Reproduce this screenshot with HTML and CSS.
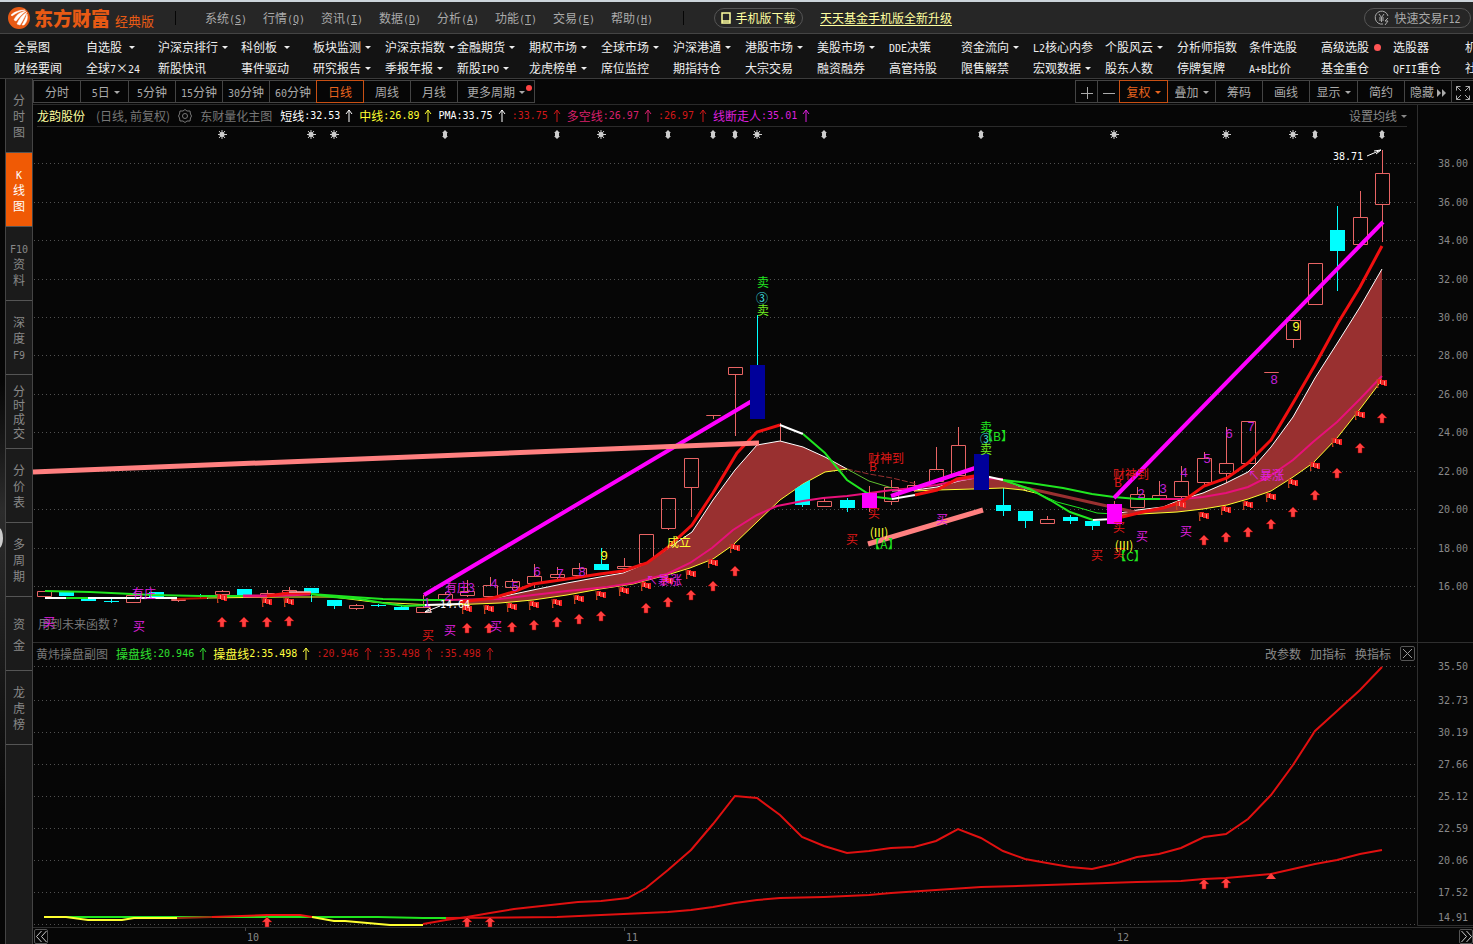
FILE: index.html
```html
<!DOCTYPE html>
<html lang="zh-CN">
<head>
<meta charset="utf-8">
<title>东方财富 经典版</title>
<link rel="stylesheet" href="styles.css">
</head>
<body>
	<header class="titlebar">
		<div class="brand">
			<svg class="logo" viewBox="0 0 22 22">
				<circle cx="11" cy="11" r="11" fill="#e85a14"/>
				<path d="M3 8C6 5 11 3 17 3C12 4 8 6 4 9Z M6 13C8 8 12 5 18 4C14 7 11 10 8 14Z M9 17C11 12 14 8 19 5C17 9 15 13 12 18Z M14 18C16 14 18 11 19 7C20 11 19 15 16 18Z" fill="#fff" stroke="#fff" stroke-width=".5"/>
			</svg>
			<strong>东方财富</strong><span>经典版</span>
		</div>
		<nav class="menu">
			<a href="#">系统<i>(<u>S</u>)</i></a>
			<a href="#">行情<i>(<u>Q</u>)</i></a>
			<a href="#">资讯<i>(<u>I</u>)</i></a>
			<a href="#">数据<i>(<u>D</u>)</i></a>
			<a href="#">分析<i>(<u>A</u>)</i></a>
			<a href="#">功能<i>(<u>T</u>)</i></a>
			<a href="#">交易<i>(<u>E</u>)</i></a>
			<a href="#">帮助<i>(<u>H</u>)</i></a>
		</nav>
		<button class="pill download"><svg width="10" height="12" viewBox="0 0 10 12"><path d="M1 1H9V11H1ZM1 9H9" fill="none" stroke="#ffffa0" stroke-width="1.5"/></svg>手机版下载</button>
		<a class="promo" href="#">天天基金手机版全新升级</a>
		<button class="pill trade"><svg width="16" height="16" viewBox="0 0 16 16"><path d="M14 6A6.500 6.500 0 1 0 9 14M5 4L7.500 7.500L10 4M7.500 7.500V12M5 8H10M5 10H10M14 8L11 11H14L11 15" fill="none" stroke="#aaa"/></svg><span>快速交易<i>F12</i></span></button>
	</header>

	<nav class="shortcuts">
		<a href="#">全景图</a><a href="#" class="drop">自选股&nbsp;</a><a href="#" class="drop">沪深京排行</a><a href="#" class="drop">科创板&nbsp;</a><a href="#" class="drop">板块监测</a><a href="#" class="drop">沪深京指数</a><a href="#" class="drop">金融期货</a><a href="#" class="drop">期权市场</a><a href="#" class="drop">全球市场</a><a href="#" class="drop">沪深港通</a><a href="#" class="drop">港股市场</a><a href="#" class="drop">美股市场</a><a href="#"><i>DDE</i>决策</a><a href="#" class="drop">资金流向</a><a href="#"><i>L2</i>核心内参</a><a href="#" class="drop">个股风云</a><a href="#">分析师指数</a><a href="#">条件选股</a><a href="#">高级选股<b class="dot"></b></a><a href="#">选股器</a><a href="#">机构</a>
		<a href="#">财经要闻</a><a href="#">全球<i>7</i>×<i>24</i></a><a href="#">新股快讯</a><a href="#">事件驱动</a><a href="#" class="drop">研究报告</a><a href="#" class="drop">季报年报</a><a href="#" class="drop">新股<i>IPO</i></a><a href="#" class="drop">龙虎榜单</a><a href="#">席位监控</a><a href="#">期指持仓</a><a href="#">大宗交易</a><a href="#">融资融券</a><a href="#">高管持股</a><a href="#">限售解禁</a><a href="#" class="drop">宏观数据</a><a href="#">股东人数</a><a href="#">停牌复牌</a><a href="#"><i>A+B</i>比价</a><a href="#">基金重仓</a><a href="#"><i>QFII</i>重仓</a><a href="#">社保</a>
	</nav>

	<div class="workspace">
		<div class="edge"><span class="handle"></span></div>
		<aside class="tabs">
			<button>分<br>时<br>图</button>
			<button class="active"><i>K</i><br>线<br>图</button>
			<button><i>F10</i><br>资<br>料</button>
			<button>深<br>度<br><i>F9</i></button>
			<button class="tight">分<br>时<br>成<br>交</button>
			<button>分<br>价<br>表</button>
			<button>多<br>周<br>期</button>
			<button class="loose">资<br>金</button>
			<button>龙<br>虎<br>榜</button>
		</aside>

		<main class="main">
			<div class="toolbar">
				<div class="group">
					<button>分时</button><button class="drop">&nbsp;<i>5</i>日</button><button><i>5</i>分钟</button><button><i>15</i>分钟</button><button><i>30</i>分钟</button><button><i>60</i>分钟</button><button class="active">日线</button><button>周线</button><button>月线</button><button class="drop more">更多周期</button>
				</div>
				<div class="group">
					<button class="small" aria-label="放大"><svg width="12" height="12"><path d="M6.500 0V12M0 6.500H12" stroke="#aaa"/></svg></button><button class="small" aria-label="缩小"><svg width="12" height="12"><path d="M0 6.500H12" stroke="#aaa"/></svg></button><button class="drop active">复权</button><button class="drop">叠加</button><button>筹码</button><button>画线</button><button class="drop">显示</button><button>简约</button><button>隐藏<svg class="ff" width="9" height="8"><path d="M0 0L4 4L0 8ZM5 0L9 4L5 8Z" fill="#aaa"/></svg></button><button class="small" aria-label="全屏"><svg width="14" height="14"><path d="M.5 4.500V.5H4.500M.5 .5L5 5M9.500 .5H13.500V4.500M13.500 .5L9 5M.5 9.500V13.500H4.500M.5 13.500L5 9M13.500 9.500V13.500H9.500M13.500 13.500L9 9" fill="none" stroke="#aaa"/></svg></button>
				</div>
			</div>

			<div class="panel-head">
				<div class="legend ruled" id="main-legend">
					<span class="stock">龙韵股份</span>
					<span class="period">(日线, 前复权)</span>
					<svg class="gear" width="14" height="14" viewBox="0 0 14 14"><path d="M7 .5L9 2L12 2L12.500 5L13.500 7L12.500 9L12 12L9 12L7 13.500L5 12L2 12L1.500 9L.5 7L1.500 5L2 2L5 2Z M7 4.500A2.500 2.500 0 1 0 7 9.500A2.500 2.500 0 1 0 7 4.500Z" fill="none" stroke="#777"/></svg>
					<span class="name">东财量化主图</span>
				</div>
				<div class="actions ruled"><button class="drop">设置均线</button></div>
				<div class="gutter"></div>
			</div>
			<svg class="chart" id="kline" viewBox="33 127 1440 516"></svg>

			<div class="panel-head sub">
				<div class="legend" id="sub-legend">
					<span class="name">黄炜操盘副图</span>
				</div>
				<div class="actions"><button>改参数</button><button>加指标</button><button>换指标</button><button class="close" aria-label="关闭"><svg width="9" height="9"><path d="M0 0L9 9M9 0L0 9" stroke="#999"/></svg></button></div>
				<div class="gutter"></div>
			</div>
			<svg class="chart" id="volume" viewBox="33 664 1440 263"></svg>

			<footer class="timeline">
				<button aria-label="向前"><svg width="11" height="11"><path d="M5.500 0L.5 5.500L5.500 11M10.500 0L5.500 5.500L10.500 11" fill="none" stroke="#ccc"/></svg></button>
				<svg class="chart" id="dates" viewBox="48 928 1411 16"></svg>
				<button aria-label="向后"><svg width="11" height="11"><path d="M.5 0L5.500 5.500L.5 11M5.500 0L10.500 5.500L5.500 11" fill="none" stroke="#ccc"/></svg></button>
			</footer>
		</main>
	</div>
	<script src="chart.js"></script>
</body>
</html>
```
FILE: styles.css
```css
* {box-sizing:border-box;}
body {margin:0; min-height:100vh; display:flex; flex-direction:column; overflow-x:hidden; background:#060606; color:#aaa; font:12px/16px "Noto Sans CJK SC",sans-serif; border-top:2px solid #ccd4da;}
a {color:inherit; text-decoration:none;}
button {margin:0; padding:0; border:0; background:none; color:inherit; font:inherit; white-space:nowrap; cursor:pointer;}
i {font:10px/12px "DejaVu Sans Mono","Liberation Mono",monospace;}
svg {flex:none;}

/* title bar */
.titlebar {display:flex; align-items:center; height:32px; background:#262626; border-bottom:1px solid #444; white-space:nowrap;}
.brand {display:flex; align-items:center; width:176px; height:14px; padding-left:8px; border-right:1px solid #050505; color:#e85a14;}
.brand strong {margin-left:4px; font-size:19px; font-weight:900;}
.brand span {margin:6px 0 0 5px; font-size:13px;}
.logo {width:22px; height:22px;}
.menu {display:flex; width:508px; height:14px; align-items:center; padding-left:29px; border-right:1px solid #050505;}
.menu a {width:58px;}
.pill {display:flex; align-items:center; justify-content:center; gap:4px; height:20px; border:1px solid #555; border-radius:10px;}
.download {width:89px; margin:0 17px 0 30px; color:#ffffa0;}
.promo {color:#ffffa0; text-decoration:underline; text-underline-offset:2px;}
.trade {width:107px; margin:0 2px 0 auto;}

/* two rows of shortcuts */
.shortcuts {display:grid; grid-template-columns:72px 72px 83px repeat(18,72px); grid-auto-rows:21px; height:45px; padding:2px 0 0 14px; align-items:center; overflow:hidden; background:#131313; border-bottom:1px solid #3c3c3c; color:#eee; white-space:nowrap;}
.drop:after {content:""; display:inline-block; margin-left:4px; vertical-align:3px; border:3px solid transparent; border-top-color:currentColor; border-bottom:0;}
.dot {display:inline-block; width:7px; height:7px; margin-left:5px; vertical-align:1px; border-radius:50%; background:#f55;}

.workspace {display:flex; flex:1;}
.edge {display:flex; align-items:center; width:5px; overflow:hidden; background:linear-gradient(#060606 35%,#2c2c2c 50%,#1c1c1c 65%,#060606 85%);}
.handle {width:8px; height:20px; margin:53px 0 0 -5px; flex:none; border-radius:50%; background:#ccc;}
.tabs {display:flex; flex-direction:column; width:28px; background:#1b1b1b; border:solid #444; border-width:0 1px; color:#888;}
.tabs button {height:74px; border-bottom:1px solid #555;}
.tabs .active {background:#f05a05; color:#fff;}
.tabs .tight {line-height:14px;}
.tabs .loose {line-height:21px;}
.main {flex:1; min-width:0; display:flex; flex-direction:column;}

/* toolbar */
.toolbar {display:flex; justify-content:space-between; height:26px; padding-top:1px; border-bottom:1px solid #2a2a2a;}
.group {display:flex;}
.group button {position:relative; width:48px; height:23px; margin-right:-1px; border:1px solid #444;}
.group .drop {width:49px;}
.group .more {width:78px;}
.group .more:before {content:""; position:absolute; right:2px; top:4px; width:6px; height:6px; border-radius:50%; background:#f44;}
.group .small {width:23px;}
.group button svg {vertical-align:middle;}
.group .ff {margin-left:3px;}
.group .active {z-index:1; border-color:#c85014; color:#e8641e;}

/* indicator rows */
.panel-head {display:flex; height:22px; white-space:nowrap;}
.legend {display:flex; flex:1; align-items:center; margin-left:4px;}
.ruled {border-bottom:1px solid #2a2a2a;}
.actions {display:flex; align-items:center; gap:9px; margin-right:10px; color:#888;}
.gutter {width:56px; border-left:1px solid #2e2e2e;}
.stock {color:#ffffa0;}
.period {margin-left:11px; color:#777;}
.gear {margin:0 8px;}
.name {margin-right:8px; color:#777;}
.value {display:flex; align-items:center; margin-right:6px;}
.value i {flex:none;}
.value svg {margin-left:5px;}
.sub {height:21px;}
.sub .legend {margin-left:3px;}
.sub .actions {margin-right:2px;}
.close {display:flex; align-items:center; justify-content:center; width:15px; height:15px; border:1px solid #555; border-radius:2px;}

.chart {display:block; width:100%; overflow:visible;}
.chart text {font:12px "Noto Sans CJK SC",sans-serif; text-anchor:middle; dominant-baseline:central;}
.chart .axis {font:10px "DejaVu Sans Mono","Liberation Mono",monospace; fill:#888;}
.chart .num {font:13px "Liberation Sans",sans-serif;}
.chart .price {font:10px "DejaVu Sans Mono","Liberation Mono",monospace; fill:#fff;}

.timeline {display:flex; height:17px; padding-left:1px; border-top:1px solid #2e2e2e;}
.timeline .chart {flex:1; width:0; min-width:0;}
.timeline button {display:flex; align-items:center; justify-content:center; width:14px; height:15px; margin-top:1px; border:1px solid #555; border-radius:2px;}
```
FILE: chart.js
```js
var RED = '#e86464', CYAN = '#00ffff', PINK = '#e8107a', MAGENTA = '#ff00ff', GREEN = '#20e620';

// legend values: [label, number, colour]
function legend(id, items) {
	var html = '';
	items.forEach(function(v) {
		html += '<span class="value" style="color:' + v[2] + '">' + v[0] + '<i>' + v[1] + '</i>' +
			'<svg width="8" height="13"><path d="M4 1V13M1 5L4 1L7 5" fill="none" stroke="' + v[2] + '"/></svg></span>';
	});
	document.getElementById(id).insertAdjacentHTML('beforeend', html);
}
legend('main-legend', [
	['短线', ':32.53', '#ffffff'], ['中线', ':26.89', '#ffff30'], ['', 'PMA:33.75', '#ffffff'],
	['', ':33.75', '#d01818'], ['多空线', ':26.97', '#d8206c'], ['', ':26.97', '#d01818'], ['线断走人', ':35.01', '#dc20dc']
]);
legend('sub-legend', [
	['操盘线', ':20.946', '#30e030'], ['操盘线', '2:35.498', '#ffff40'],
	['', ':20.946', '#c81818'], ['', ':35.498', '#c81818'], ['', ':35.498', '#c81818']
]);

function rect(x, y, w, h, fill) {
	return '<rect x="' + x + '" y="' + y + '" width="' + w + '" height="' + h + '" fill="' + fill + '"/>';
}
function line(points, color, width, extra) {
	return '<polyline points="' + points + '" fill="none" stroke="' + color + '" stroke-width="' + (width || 1) + '" ' + (extra || '') + '/>';
}
function text(x, y, s, color, cls) {
	// chinese glyphs sit a pixel low in their box
	return '<text x="' + x + '" y="' + (cls ? y : y - 1) + '" fill="' + color + '" class="' + (cls || '') + '">' + s + '</text>';
}
function grid(rows) {
	var out = '';
	rows.forEach(function(r) {
		out += line('34,' + (r[0] + .5) + ' 1416,' + (r[0] + .5), '#505050', 1, 'stroke-dasharray="1 3"');
		out += text(1453, r[1] || r[0], r[2], '#888', 'axis');
	});
	return out;
}
function arrow(x, y) {
	return '<path d="M' + x + ' ' + (y - 5) + 'l5 5h-3v5h-4v-5h-3z" fill="#ff4040" stroke="#a00000" stroke-width=".5"/>';
}
function flag(x, y) {
	return '<path d="M' + (x - 4) + ' ' + (y - 4) + 'h4v1h5v6h-3v-1h-3v-1h-3v4h-1z" fill="#f02020"/>' +
		'<path d="M' + (x - 5) + ' ' + (y - 4) + 'l1 9" stroke="#c05020"/>' +
		'<path d="M' + (x - 1.5) + ' ' + (y - 3) + 'v4M' + (x + 2.5) + ' ' + (y - 2) + 'v4" stroke="#ff9080"/>';
}

/* ---- main chart ---- */
var svg = '';
svg += grid([[163, 0, '38.00'], [202, 0, '36.00'], [240, 0, '34.00'], [279, 0, '32.00'], [317, 0, '30.00'], [355, 0, '28.00'],
	[394, 0, '26.00'], [432, 0, '24.00'], [471, 0, '22.00'], [509, 0, '20.00'], [548, 0, '18.00'], [586, 0, '16.00']]);
svg += line('1417.5,127 1417.5,643', '#2e2e2e') + line('33,642.5 1473,642.5', '#2e2e2e');
svg += text(74, 624, '用到未来函数', '#777') + text(115, 623, '?', '#777', 'axis');

[222, 311, 334, 601, 757, 1114, 1226, 1293].forEach(function(x) {
	svg += '<path d="M' + x + ' 130v9M' + (x - 4) + ' 134.500h9M' + (x - 3) + ' 131l6 7M' + (x + 3) + ' 131l-6 7" stroke="#ccc"/><circle cx="' + x + '" cy="134.500" r="2.500" fill="#ccc"/>';
});
[445, 557, 668, 713, 735, 824, 981, 1315, 1382].forEach(function(x) {
	svg += '<path d="M' + x + ' 130l3 3h-1v3h1l-3 3l-3 -3h1v-3h-1z" fill="#ccc"/>';
});

// candles: x, kind (u = hollow, d = cyan, n = navy, m = magenta), open/close edges, high, low
var candles = [
	[44,'u',591,596,591,596],[66,'d',592,596,592,596],[88,'d',599,601,599,601],[111,'d',601,602,599,603],[133,'u',595,602,595,603],
	[156,'d',592,597,592,597],[178,'u',599,600,598,602],[200,'d',598,599,594,599],[222,'u',591,594,590,594],[244,'d',589,595,589,595],
	[267,'u',593,596,590,598],[289,'u',590,592,587,595],[311,'d',588,593,588,602],[334,'d',600,606,600,609],[356,'u',605,608,604,610],
	[378,'d',605,606,604,607],[401,'d',607,610,605,610],[423,'u',607,612,595,612],[445,'u',594,600,592,600],[467,'u',591,595,580,597],
	[490,'u',585,596,577,596],[512,'u',581,587,579,590],[534,'u',576,583,564,588],[557,'u',574,577,567,579],[579,'u',568,575,563,575],
	[601,'d',564,570,548,570],[624,'u',566,568,558,570],[646,'u',534,563,534,563],[668,'u',498,528,498,530],[691,'u',458,487,458,517],
	[713,'u',415,415,415,419],[735,'u',367,374,367,436],[757,'n',365,419,315,365],[780,'x',423,441,423,441],[802,'d',481,505,481,507],
	[824,'u',501,506,498,507],[847,'d',500,508,498,512],[869,'m',493,508,486,512],[891,'u',487,501,480,505],[914,'u',485,488,481,492],
	[936,'u',469,481,447,481],[958,'u',445,475,427,475],[981,'n',454,490,454,490],[1003,'d',505,511,488,516],[1025,'d',511,521,511,528],
	[1047,'u',519,523,516,523],[1070,'d',517,521,515,524],[1092,'d',521,526,520,530],[1114,'m',504,524,501,524],[1137,'u',494,507,487,507],
	[1159,'u',495,499,481,499],[1181,'u',481,496,466,499],[1204,'u',458,482,452,487],[1226,'u',463,473,427,484],[1248,'u',421,463,421,463],
	[1271,'u',372,372,372,372],[1293,'u',320,339,320,348],[1315,'u',263,304,263,304],[1337,'d',230,251,206,291],[1360,'u',217,244,191,244],
	[1382,'u',173,204,150,242]
];
function drawCandle(c) {
	var x = c[0], color = c[1] == 'd' || c[1] == 'n' ? CYAN : RED, s = '';
	if (c[1] == 'x') {
		return rect(x, c[2], 1, c[3] - c[2], color);
	}
	s += rect(x, c[4], 1, c[2] - c[4], color) + rect(x, c[3], 1, c[5] - c[3], color);
	if (c[1] == 'u') {
		return s + '<path d="M' + (x - 6.5) + ' ' + (c[2] + .5) + 'h14v' + (c[3] - c[2]) + 'h-14z" fill="none" stroke="' + RED + '"/>';
	}
	return s + rect(x - 7, c[2], 15, c[3] - c[2], {d: CYAN, n: '#00009a', m: MAGENTA}[c[1]]);
}
candles.forEach(function(c) {
	if (c[1] != 'm') {
		svg += drawCandle(c);
	}
});

// short and middle averages with the band between them
var up1 = '467,601 500,597 533,590 567,583 600,577 623,573 647,563 673,545 692,532 713,500 735,470 757,445 780,441 803,447 825,457 847,469';
var low1 = '450,605 500,603 533,600 567,595 600,589 633,584 667,575 690,568 713,559 733,545 757,522 780,500 803,484 825,472 847,469';
var up2 = '892,491 915,490 937,487 959,481 981,477 989,477 1003,480 1017,485 1027,491';
var low2 = '915,491 937,490 973,489 1003,488 1023,490 1040,494';
var up3 = '1114,514 1137,510 1163,507 1180,500 1203,493 1226,483 1248,472 1257,463 1271,447 1293,417 1315,378 1338,342 1360,307 1382,269';
var low3 = '1114,516 1140,514 1177,512 1203,509 1227,505 1248,499 1271,491 1293,477 1313,463 1337,438 1360,409 1382,380';
[[up1, low1], [up2, low2], [up3, low3]].forEach(function(b) {
	svg += '<polygon points="' + b[0] + ' ' + b[1].split(' ').reverse().join(' ') + '" fill="#993030"/>';
	svg += line(b[0], '#fff') + line(b[1], '#ffff30');
});
svg += '<polygon points="795,489 803,484 810,480 810,505 795,505" fill="#00ffff"/>';
svg += line('847,469 869,474 892,478 917,484', '#993030', 1, 'stroke-dasharray="6 2"');
svg += line('847,469 869,481 892,488', '#60c030');
svg += line('1020,487 1040,491 1107,506 1135,512', '#993030', 3);
svg += line('1003,480 1030,490 1057,502 1080,508 1097,513 1114,514', GREEN);

// left part
svg += line('45,598 177,598', '#fff', 2) + line('66,598 88,598', GREEN, 2) + line('177,599 207,598', '#c01000', 2) + line('207,598 283,597 333,597 373,602 433,605 465,604', '#ffff30', 1);
svg += line('45,591 90,592 153,595 200,596 243,596', GREEN, 2) + line('243,596 260,596 310,594', PINK, 3) + line('267,596 289,593 311,593', '#f01010', 3) + line('289,592 311,592', '#fff', 1);
svg += line('311,594 353,597 383,599 423,600 445,600', GREEN, 2) + line('311,594 333,597 360,599 383,603 405,606 430,605', GREEN, 2) + line('425,605 460,604', '#fff', 2);

// long average
svg += line('445,600 500,599 533,595 567,591 607,587 633,583 667,574 690,563 712,548 733,530 757,515 777,506 803,501 823,498 847,496 870,493 892,490 915,488 937,485 959,480 974,478 1003,479', PINK, 2);
svg += line('1003,480 1030,483 1063,488 1092,494 1114,497 1137,499 1160,499', GREEN, 2);
svg += line('1160,499 1182,499 1203,497 1226,493 1248,487 1270,476 1293,460 1313,442 1337,422 1360,399 1382,376', PINK, 2);

// trend line, coloured by phase
svg += line('460,602 493,598 513,592 533,584 567,579 600,574 623,571 647,563 667,548 692,525 713,493 737,453 757,432 780,425', '#f01010', 3);
svg += line('780,425 803,434', '#fff', 2) + line('803,434 825,453 847,480 867,493 877,497 892,499', GREEN, 2) + line('892,499 915,495', '#fff', 2);
svg += line('915,495 937,490 957,479 974,476 985,476', '#f01010', 3) + line('985,476 1003,480', '#fff', 2);
svg += line('1003,480 1030,489 1050,500 1070,512 1093,520', GREEN, 2) + line('1093,520 1114,519', '#fff', 2);
svg += line('1122,517 1147,511 1163,508 1182,502 1204,486 1227,478 1248,463 1271,440 1293,403 1315,365 1338,323 1360,287 1382,246', '#f01010', 3);

// drawn lines
svg += line('424,595 757,398', MAGENTA, 4) + line('891,496 981,466', MAGENTA, 4) + line('1114,498 1383,222', MAGENTA, 4);
svg += line('33,472 759,443', '#ff8080', 5) + line('868,544 983,510', '#ff8080', 5);
candles.forEach(function(c) {
	if (c[1] == 'm' || c[1] == 'n') {
		svg += drawCandle(c);
	}
});

[[222,622],[244,622],[267,622],[289,621],[467,628],[489,628],[512,627],[534,625],[557,622],[579,619],[601,616],[646,608],[668,602],[691,595],
	[713,586],[735,571],[1204,540],[1226,537],[1248,532],[1271,524],[1293,512],[1315,495],[1337,473],[1360,448],[1382,418]].forEach(function(p) {
	svg += arrow(p[0], p[1]);
});
[[222,598],[267,602],[289,602],[467,609],[489,609],[512,607],[534,605],[557,603],[579,599],[601,595],[624,591],[646,586],[668,581],[691,574],
	[713,563],[735,548],[1181,505],[1204,516],[1226,510],[1248,505],[1271,497],[1293,483],[1315,466],[1337,442],[1360,415],[1382,383]].forEach(function(p) {
	svg += flag(p[0], p[1]);
});

// signals
[[144,593,'有庄'],[139,626,'买'],[49,622,'买'],[457,587,'有庄'],[450,630,'买'],[496,626,'买'],[942,519,'买'],[1142,536,'买'],[1186,531,'买'],
	[664,580,'↖暴涨'],[1266,475,'↖暴涨']].forEach(function(t) {
	svg += text(t[0], t[1], t[2], '#e020e0');
});
[[428,635,'买'],[852,539,'买'],[874,513,'买'],[1097,555,'买'],[1119,527,'买'],[1119,553,'买'],[886,458,'财神到'],[1131,474,'财神到'],
	[873,466,'B'],[1118,482,'B']].forEach(function(t) {
	svg += text(t[0], t[1], t[2], '#e01818');
});
[[427,602,1],[448,595,2],[471,587,3],[494,583,4],[515,586,5],[537,571,6],[560,573,7],[582,571,8],[1141,493,2],[1163,488,3],[1184,472,4],
	[1207,458,5],[1229,433,6],[1251,426,7],[1274,379,8]].forEach(function(t) {
	svg += text(t[0], t[1], t[2], '#c020d8', 'num');
});
svg += text(604, 555, '9', '#ffff30', 'num') + text(1296, 326, '9', '#ffff30', 'num');
svg += text(679, 542, '成立', '#ffff30') + text(879, 532, '(III)', '#ffff30') + text(1124, 545, '(III)', '#ffff30');
svg += text(763, 282, '卖', '#20e620') + text(762, 298, '③', '#40e0e0') + text(763, 310, '卖', '#70f020');
svg += text(986, 427, '卖', '#20e620') + text(986, 439, '③', '#40e0e0') + text(986, 449, '卖', '#70f020');
svg += text(997, 436, '【B】', '#20e620') + text(884, 544, '【A】', '#20e620') + text(1130, 556, '【C】', '#20e620');
svg += text(1348, 156, '38.71', '#fff', 'price') + '<path d="M1367 156L1381 150M1381 150l-7 1M1381 150l-5 4" stroke="#fff"/>';
svg += text(455, 604, '14.64', '#fff', 'price') + '<path d="M440 606L425 612M425 612l7 0M425 612l5 -4" stroke="#fff"/>';
document.getElementById('kline').innerHTML = svg;

/* ---- lower chart ---- */
svg = grid([[666, 0, '35.50'], [700, 0, '32.73'], [732, 0, '30.19'], [764, 0, '27.66'], [796, 0, '25.12'], [828, 0, '22.59'],
	[860, 0, '20.06'], [892, 0, '17.52'], [924, 917, '14.91']]);
svg += line('1417.5,664 1417.5,925.5 1473,925.5', '#2e2e2e');
svg += line('66,917 378,917 423,918 446,918', GREEN, 2);
svg += line('44,917 66,917 88,920 122,920 134,918 177,918', '#ffff30', 2) + line('177,918 212,917', '#a03010', 2) + line('212,917 267,915 300,915 312,917', '#f01010', 2);
svg += line('312,917 334,921 345,921 390,925 423,925', '#ffff30', 2);
svg += line('423,924 446,920 467,917 490,913 514,909 560,904 578,902 601,901 628,898 646,888 668,870 691,850 713,824 735,796 757,798 780,815 802,837 824,846 847,853 869,851 891,848 914,847 936,841 958,829 981,838 1003,851 1025,859 1047,863 1070,867 1092,869 1114,864 1137,857 1159,854 1181,848 1204,837 1226,834 1248,819 1271,795 1293,765 1315,731 1337,711 1360,690 1382,667', '#e01010', 2);
svg += line('446,918 557,917 601,915 646,913 668,912 691,910 713,907 735,903 757,900 780,898 824,897 869,895 891,893 936,890 981,887 1047,885 1137,882 1181,881 1204,879 1226,878 1271,874 1293,869 1315,864 1337,860 1360,854 1382,850', '#e01010', 2);
[[267, 922], [467, 922], [490, 922], [1204, 884], [1226, 883]].forEach(function(p) {
	svg += arrow(p[0], p[1]);
});
svg += '<path d="M1271 873l5 6h-10z" fill="#ff4040"/>';
document.getElementById('volume').innerHTML = svg;

document.getElementById('dates').innerHTML = text(253, 937, '10', '#888', 'axis') + text(632, 937, '11', '#888', 'axis') + text(1123, 937, '12', '#888', 'axis') +
	'<path d="M245.500 928v3M624.500 928v3M1114.500 928v3" stroke="#444"/>';
```
